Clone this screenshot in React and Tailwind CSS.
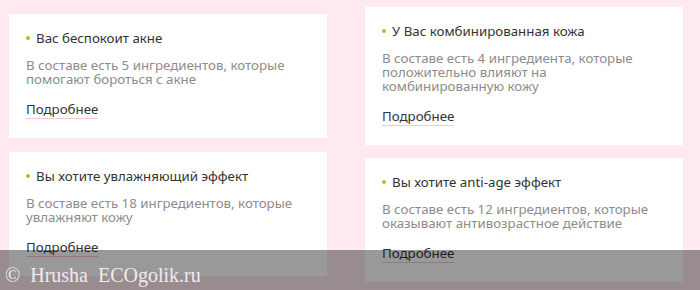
const cards = {
    left: [
        {
            title: 'Вас беспокоит акне',
            text: 'В составе есть 5 ингредиентов, которые помогают бороться с акне',
        },
        {
            title: 'Вы хотите увлажняющий эффект',
            text: 'В составе есть 18 ингредиентов, которые увлажняют кожу',
        },
    ],
    right: [
        {
            title: 'У Вас комбинированная кожа',
            text: 'В составе есть 4 ингредиента, которые положительно влияют на комбинированную кожу',
        },
        {
            title: 'Вы хотите anti-age эффект',
            text: 'В составе есть 12 ингредиентов, которые оказывают антивозрастное действие',
        },
    ],
};

// One ingredient-benefit card
const BenefitCard = ({ title, text }) => (
    <div className="bg-white pl-[17px] pr-4 pt-[15px] pb-[18px]">
        <div className="flex items-center gap-[6px] text-[13.3px] text-[#333] leading-[18px]">
            <span className="w-[4px] h-[4px] rounded-full bg-[#a6c81e] shrink-0 mt-[-1px]" />
            <span>{title}</span>
        </div>
        <p className="mt-[11px] text-[13.3px] leading-[14px] text-[#8c8c8c] max-w-[272px]">{text}</p>
        <div className="mt-[10px]">
            <span className="inline-block text-[13.3px] leading-[15px] text-[#333] border-b border-[#f5c7d5] pb-[1px]">
                Подробнее
            </span>
        </div>
    </div>
);

export default function App() {
    return (
        <div
            className="relative w-[700px] h-[290px] overflow-hidden bg-[#fde9ef]"
            style={{ fontFamily: '"Noto Sans", "Open Sans", sans-serif' }}
        >
            <div className="flex gap-[38px] pl-[9px]">
                <div className="w-[318px] pt-[14px] flex flex-col gap-[14px]">
                    {cards.left.map(c => <BenefitCard key={c.title} {...c} />)}
                </div>
                <div className="w-[318px] pt-[7px] flex flex-col gap-[13px]">
                    {cards.right.map(c => <BenefitCard key={c.title} {...c} />)}
                </div>
            </div>

            {/* Watermark band */}
            <div className="absolute left-0 right-0 bottom-0 h-[40px] bg-black/40 pl-[5px] pt-[14px]">
                <span
                    className="block text-[20px] leading-[22px] text-[#f3e9ec]"
                    style={{ fontFamily: '"Liberation Serif", serif' }}
                >
                    ©&nbsp; Hrusha&nbsp; ECOgolik.ru
                </span>
            </div>
        </div>
    );
}
